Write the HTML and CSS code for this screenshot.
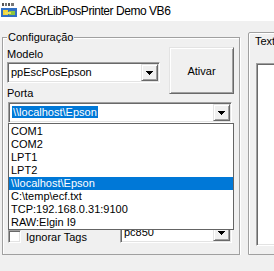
FILE: index.html
```html
<!DOCTYPE html>
<html lang="pt">
<head>

    <meta charset="UTF-8">
    <meta name="viewport" content="width=device-width, initial-scale=1.0">
    <title>ACBrLibPosPrinter Demo VB6</title>

    <link rel="stylesheet" href="styles.css">

</head>

<body>

    <div id="titlebar">
        <svg id="app-icon" width="16" height="16" viewBox="0 0 16 16">
            <rect x="0" y="0" width="16" height="16" fill="#fff"/>
            <rect x="1" y="1" width="2" height="3" fill="#555"/>
            <rect x="4" y="1" width="2" height="3" fill="#777"/>
            <rect x="7" y="1" width="2" height="3" fill="#555"/>
            <rect x="10" y="1" width="3" height="3" fill="#777"/>
            <rect x="0" y="6" width="16" height="9" fill="#2f6fc4"/>
            <rect x="2" y="8" width="5" height="5" fill="#f2d43a"/>
            <rect x="8" y="9" width="6" height="4" fill="#8cc63f"/>
            <rect x="4" y="10" width="6" height="2" fill="#e8e060"/>
        </svg>
        <span id="title">ACBrLibPosPrinter Demo VB6</span>
    </div>

    <div id="client">

        <fieldset class="frame" id="frame-config">
            <legend>Configuração</legend>

            <div id="config-grid">

                <label class="field-label" id="label-modelo">Modelo</label>
                <div class="combo" id="combo-modelo">
                    <span class="combo-text">ppEscPosEpson</span>
                    <span class="combo-button"><svg width="7" height="4" viewBox="0 0 7 4"><polygon points="0,0 7,0 3.5,4" fill="#000"/></svg></span>
                </div>

                <label class="field-label" id="label-porta">Porta</label>

                <button id="ativar-button">Ativar</button>

                <div id="porta-field">
                    <div class="combo" id="combo-porta">
                        <span class="combo-text"><span class="selected-text">\\localhost\Epson</span></span>
                        <span class="combo-button"><svg width="7" height="4" viewBox="0 0 7 4"><polygon points="0,0 7,0 3.5,4" fill="#000"/></svg></span>
                    </div>
                    <ul id="porta-list">
                        <li>COM1</li>
                        <li>COM2</li>
                        <li>LPT1</li>
                        <li>LPT2</li>
                        <li class="selected">\\localhost\Epson</li>
                        <li>C:\temp\ecf.txt</li>
                        <li>TCP:192.168.0.31:9100</li>
                        <li>RAW:Elgin I9</li>
                    </ul>
                </div>

                <div id="options-row">
                    <span class="checkbox"></span>
                    <span class="check-label">Ignorar Tags</span>
                    <div class="combo" id="combo-pagina">
                        <span class="combo-text">pc850</span>
                        <span class="combo-button"><svg width="7" height="4" viewBox="0 0 7 4"><polygon points="0,0 7,0 3.5,4" fill="#000"/></svg></span>
                    </div>
                </div>

            </div>
        </fieldset>

        <div id="tab-panel">
            <div id="tab-caption">Texto</div>
            <div id="text-box"></div>
        </div>

    </div>

</body>
</html>
```

FILE: styles.css
```css
body {

    margin: 0;
    padding: 0;
    width: 274px;
    height: 271px;
    overflow: hidden;
    background-color: #f0f0f0;
    font-family: "Liberation Sans", Arial, sans-serif;
    font-size: 11px;
    color: #000;

}

#titlebar {

    height: 21px;
    display: flex;
    align-items: center;
    background-color: #fff;

}

#app-icon {

    margin-left: 1px;
    margin-top: -1px;

}

#title {

    margin-left: 3px;
    font-size: 12px;
    letter-spacing: -0.45px;
    white-space: nowrap;

}

#client {

    display: flex;
    align-items: flex-start;
    padding-left: 2px;
    overflow: hidden;

}

/* etched frame, like the VB6 Frame control */
.frame {

    margin: 10px 0 0 0;
    padding: 0 0 0 4px;
    min-width: 0;
    width: 238px;
    height: 224px;
    box-sizing: border-box;
    border: 1px solid #a0a0a0;
    box-shadow: inset 1px 1px 0 #fff, 1px 1px 0 #fff;
    flex-shrink: 0;

}

.frame legend {

    padding: 0 1px;
    line-height: 13px;
    background-color: #f0f0f0;

}

#config-grid {

    display: grid;
    grid-template-columns: 153px 65px;
    column-gap: 9px;
    margin-top: 4px;

}

.field-label {

    display: block;
    line-height: 13px;

}

#label-modelo {

    grid-column: 1;
    grid-row: 1;
    margin-bottom: 1px;

}

#combo-modelo {

    grid-column: 1;
    grid-row: 2;

}

#label-porta {

    grid-column: 1;
    grid-row: 3;
    margin-top: 4px;
    margin-bottom: 2px;

}

#ativar-button {

    grid-column: 2;
    grid-row: 1 / span 3;
    align-self: start;
    margin: -1px 0 0 0;
    height: 47px;
    padding: 0;
    font-family: inherit;
    font-size: 11px;
    color: #000;
    background-color: #f0f0f0;
    border: 1px solid;
    border-color: #e3e3e3 #696969 #696969 #e3e3e3;
    box-shadow: inset 1px 1px 0 #fff, inset -1px -1px 0 #a0a0a0;

}

/* combo boxes */
.combo {

    display: flex;
    align-items: center;
    height: 21px;
    box-sizing: border-box;
    background-color: #fff;
    border: 1px solid;
    border-color: #a0a0a0 #fff #fff #a0a0a0;
    box-shadow: inset 1px 1px 0 #696969, inset -1px -1px 0 #e3e3e3;
    padding: 1px;

}

.combo-text {

    flex: 1;
    padding-left: 2px;
    line-height: 17px;
    white-space: nowrap;
    overflow: hidden;

}

.combo-button {

    width: 17px;
    height: 17px;
    box-sizing: border-box;
    display: flex;
    align-items: center;
    justify-content: center;
    background-color: #f0f0f0;
    border: 1px solid;
    border-color: #e3e3e3 #696969 #696969 #e3e3e3;
    box-shadow: inset 1px 1px 0 #fff, inset -1px -1px 0 #a0a0a0;

}

.combo-button svg {

    display: block;
    shape-rendering: crispEdges;

}

#porta-field {

    grid-column: 1 / span 2;
    position: relative;

}

#combo-porta {

    margin-left: 1px;
    width: 224px;

}

.selected-text {

    display: inline-block;
    padding: 0 1px;
    line-height: 12px;
    background-color: #0078d7;
    color: #fff;

}

/* open dropdown of the Porta combo */
#porta-list {

    position: absolute;
    top: 21px;
    left: 1px;
    width: 226px;
    box-sizing: border-box;
    margin: 0;
    padding: 1px 0 0 0;
    list-style: none;
    background-color: #fff;
    border: 1px solid #646464;
    z-index: 2;

}

#porta-list li {

    height: 13px;
    line-height: 13px;
    padding-left: 2px;
    white-space: nowrap;

}

#porta-list li.selected {

    background-color: #0078d7;
    color: #fff;

}

#options-row {

    grid-column: 1 / span 2;
    display: flex;
    align-items: flex-start;
    margin-top: 99px;

}

.checkbox {

    width: 13px;
    height: 13px;
    box-sizing: border-box;
    margin: 8px 0 0 1px;
    background-color: #fff;
    border: 1px solid;
    border-color: #a0a0a0 #fff #fff #a0a0a0;
    box-shadow: inset 1px 1px 0 #696969, inset -1px -1px 0 #e3e3e3;

}

.check-label {

    margin: 9px 0 0 5px;
    line-height: 13px;

}

#combo-pagina {

    margin-left: auto;
    margin-right: 2px;
    width: 112px;

}

/* tab control on the right */
#tab-panel {

    flex-shrink: 0;
    width: 120px;
    height: 223px;
    box-sizing: border-box;
    margin: 11px 0 0 8px;
    padding: 2px 0 0 6px;
    border: 1px solid #a0a0a0;
    border-radius: 2px 0 0 0;
    box-shadow: inset 1px 1px 0 #fff, 0 1px 0 #fff;

}

#tab-caption {

    line-height: 13px;
    white-space: nowrap;

}

#text-box {

    margin: 15px 0 0 1px;
    height: 183px;
    box-sizing: border-box;
    background-color: #fff;
    border: 1px solid;
    border-color: #a0a0a0 #fff #fff #a0a0a0;
    box-shadow: inset 1px 1px 0 #696969, inset -1px -1px 0 #e3e3e3;

}
```
